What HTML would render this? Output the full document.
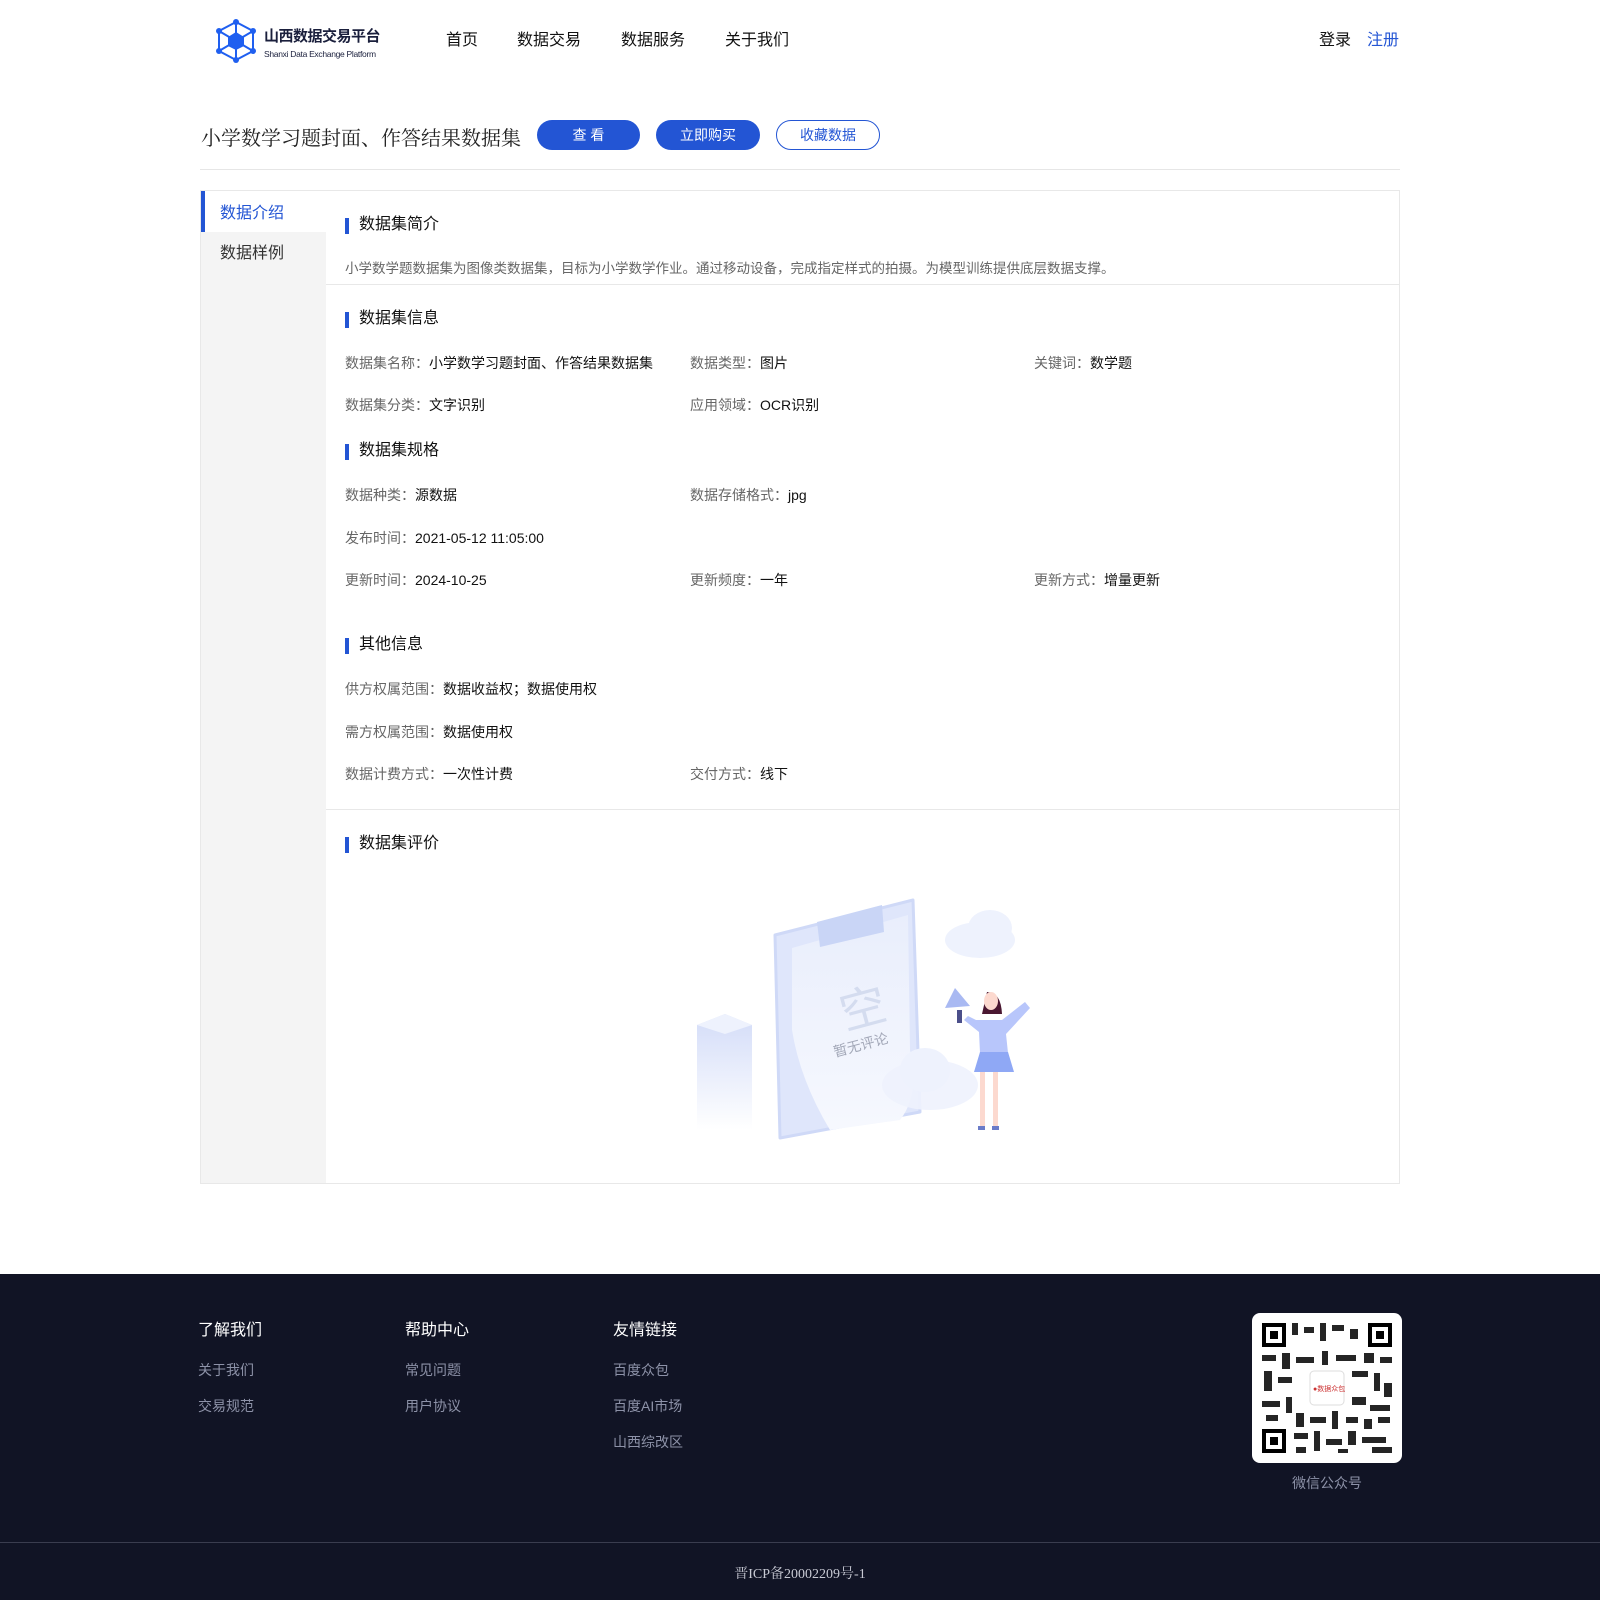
<!DOCTYPE html>
<html><head><meta charset="utf-8"><style>
*{margin:0;padding:0;box-sizing:border-box}
body{width:1600px;height:1600px;background:#fff;font-family:"Liberation Sans","Noto Sans CJK SC",sans-serif;position:relative;color:#111;overflow:hidden}
.a{position:absolute;white-space:nowrap}
.nav{font-size:16px;color:#111;top:26px}
.btn{position:absolute;top:120px;height:30px;border-radius:15px;font-size:14px;text-align:center;line-height:30px}
.sec{position:absolute;left:345px;font-size:16px;color:#111;padding-left:14px;line-height:20px}
.sec:before{content:"";position:absolute;left:0;top:3px;width:4px;height:16px;background:#2355d4}
.f{position:absolute;font-size:14px;color:#666;line-height:18px}
.f b{font-weight:normal;color:#111}
.fh{position:absolute;font-size:16px;color:#fff}
.fl{position:absolute;font-size:14px;color:#8d92a8}
</style></head><body>
<svg class="a" style="left:216px;top:19px" width="40" height="44" viewBox="0 0 40 44">
<g stroke="#1f5ff0" stroke-width="2" fill="none"><polygon points="20,3 37,12 37,32 20,41 3,32 3,12"/><line x1="20" y1="3" x2="20" y2="41"/><line x1="3" y1="12" x2="37" y2="32"/><line x1="37" y1="12" x2="3" y2="32"/></g>
<polygon points="20,13 28,18 28,27 20,31 12,27 12,18" fill="#1f5ff0"/>
<g fill="#1f5ff0"><circle cx="20" cy="3" r="3"/><circle cx="37" cy="12" r="3"/><circle cx="37" cy="32" r="3"/><circle cx="20" cy="41" r="3"/><circle cx="3" cy="32" r="3"/><circle cx="3" cy="12" r="3"/></g></svg>
<div class="a" style="left:264px;top:25px;font-size:15px;font-weight:bold;color:#1a1f3c;letter-spacing:-.5px">山西数据交易平台</div>
<div class="a" style="left:264px;top:49px;font-size:8.5px;color:#1a1f3c;letter-spacing:-.3px">Shanxi Data Exchange Platform</div>
<div class="a nav" style="left:446px">首页</div>
<div class="a nav" style="left:517px">数据交易</div>
<div class="a nav" style="left:621px">数据服务</div>
<div class="a nav" style="left:725px">关于我们</div>
<div class="a nav" style="left:1319px">登录</div>
<div class="a nav" style="left:1367px;color:#2355d4">注册</div>

<div class="a" style="left:201px;top:122px;font-size:20px;color:#222;font-family:'Liberation Serif','Noto Serif CJK SC',serif">小学数学习题封面、作答结果数据集</div>
<div class="btn" style="left:537px;width:103px;background:#2355d4;color:#fff">查 看</div>
<div class="btn" style="left:656px;width:104px;background:#2355d4;color:#fff">立即购买</div>
<div class="btn" style="left:776px;width:104px;border:1px solid #2355d4;color:#2355d4;line-height:28px">收藏数据</div>
<div class="a" style="left:200px;top:169px;width:1200px;height:1px;background:#e6e6e6"></div>

<div class="a" style="left:200px;top:190px;width:1200px;height:994px;border:1px solid #e8e8e8"></div>
<div class="a" style="left:201px;top:191px;width:125px;height:992px;background:#f4f4f4"></div>
<div class="a" style="left:201px;top:191px;width:125px;height:41px;background:#fff;border-left:4px solid #2355d4"></div>
<div class="a" style="left:220px;top:199px;font-size:16px;color:#2355d4">数据介绍</div>
<div class="a" style="left:220px;top:239px;font-size:16px;color:#333">数据样例</div>

<div class="sec" style="top:215px">数据集简介</div>
<div class="f" style="left:345px;top:260px;font-size:13.5px">小学数学题数据集为图像类数据集，目标为小学数学作业。通过移动设备，完成指定样式的拍摄。为模型训练提供底层数据支撑。</div>
<div class="a" style="left:326px;top:284px;width:1073px;height:1px;background:#e8e8e8"></div>
<div class="sec" style="top:309px">数据集信息</div>
<div class="f" style="left:345px;top:354px">数据集名称：<b>小学数学习题封面、作答结果数据集</b></div>
<div class="f" style="left:690px;top:354px">数据类型：<b>图片</b></div>
<div class="f" style="left:1034px;top:354px">关键词：<b>数学题</b></div>
<div class="f" style="left:345px;top:396px">数据集分类：<b>文字识别</b></div>
<div class="f" style="left:690px;top:396px">应用领域：<b>OCR识别</b></div>
<div class="sec" style="top:441px">数据集规格</div>
<div class="f" style="left:345px;top:486px">数据种类：<b>源数据</b></div>
<div class="f" style="left:690px;top:486px">数据存储格式：<b>jpg</b></div>
<div class="f" style="left:345px;top:529px">发布时间：<b>2021-05-12 11:05:00</b></div>
<div class="f" style="left:345px;top:571px">更新时间：<b>2024-10-25</b></div>
<div class="f" style="left:690px;top:571px">更新频度：<b>一年</b></div>
<div class="f" style="left:1034px;top:571px">更新方式：<b>增量更新</b></div>
<div class="sec" style="top:635px">其他信息</div>
<div class="f" style="left:345px;top:680px">供方权属范围：<b>数据收益权；数据使用权</b></div>
<div class="f" style="left:345px;top:723px">需方权属范围：<b>数据使用权</b></div>
<div class="f" style="left:345px;top:765px">数据计费方式：<b>一次性计费</b></div>
<div class="f" style="left:690px;top:765px">交付方式：<b>线下</b></div>
<div class="a" style="left:326px;top:809px;width:1073px;height:1px;background:#e8e8e8"></div>
<div class="sec" style="top:834px">数据集评价</div>

<svg class="a" style="left:680px;top:880px" width="380" height="270" viewBox="0 0 380 270">
<defs><linearGradient id="g1" x1="0" y1="0" x2="0" y2="1"><stop offset="0" stop-color="#d3dcf8"/><stop offset="1" stop-color="#fff"/></linearGradient>
<linearGradient id="g2" x1="0" y1="0" x2="0" y2="1"><stop offset="0" stop-color="#e9eefc"/><stop offset="1" stop-color="#f6f8fe"/></linearGradient></defs>
<polygon points="17,145 45,134 72,145 72,250 17,250" fill="url(#g1)"/>
<polygon points="17,145 45,134 72,145 45,154" fill="#eef2fd"/>
<polygon points="95,55 233,20 240,232 100,258" fill="#dfe6fb" stroke="#cfd9f7" stroke-width="3" stroke-linejoin="round"/>
<path d="M112,68 L228,35 L230,170 Q240,215 220,240 L150,250 Q120,200 112,150 Z" fill="url(#g2)"/>
<polygon points="137,42 202,25 204,52 140,67" fill="#c9d5f6"/>
<text x="165" y="150" font-size="46" fill="#d4dcef" transform="rotate(-15 165 150)" font-family="Noto Sans CJK SC,sans-serif">空</text>
<text x="155" y="177" font-size="14" fill="#a3a8b8" transform="rotate(-15 155 177)" font-family="Noto Sans CJK SC,sans-serif">暂无评论</text>
<ellipse cx="250" cy="205" rx="48" ry="25" fill="#eef2fd" opacity=".9"/>
<ellipse cx="245" cy="190" rx="25" ry="22" fill="#eef2fd"/>
<ellipse cx="300" cy="60" rx="35" ry="18" fill="#eef2fd"/>
<ellipse cx="310" cy="48" rx="22" ry="18" fill="#eef2fd"/>
<polygon points="265,128 275,108 290,126" fill="#a9b9f2"/>
<rect x="277" y="130" width="5" height="13" fill="#4b4f8a"/>
<path d="M307,112 q14,0 15,22 l-20,0 z" fill="#4a1731"/>
<ellipse cx="311" cy="121" rx="7" ry="9" fill="#fcd9cf"/>
<path d="M296,140 L322,140 L345,122 L350,128 L326,154 L328,173 L300,173 L299,152 L284,140 L288,136 Z" fill="#b8c6fb"/>
<polygon points="300,172 328,172 334,192 294,192" fill="#8fa8f5"/>
<rect x="300" y="192" width="5" height="55" fill="#fcd9cf"/><rect x="313" y="192" width="5" height="55" fill="#fcd9cf"/>
<rect x="298" y="246" width="7" height="4" fill="#6a7bc8"/><rect x="312" y="246" width="7" height="4" fill="#6a7bc8"/>
</svg>

<div class="a" style="left:0;top:1274px;width:1600px;height:326px;background:#111425"></div>
<div class="fh" style="left:198px;top:1316px">了解我们</div>
<div class="fh" style="left:405px;top:1316px">帮助中心</div>
<div class="fh" style="left:613px;top:1316px">友情链接</div>
<div class="fl" style="left:198px;top:1360px">关于我们</div>
<div class="fl" style="left:198px;top:1396px">交易规范</div>
<div class="fl" style="left:405px;top:1360px">常见问题</div>
<div class="fl" style="left:405px;top:1396px">用户协议</div>
<div class="fl" style="left:613px;top:1360px">百度众包</div>
<div class="fl" style="left:613px;top:1396px">百度AI市场</div>
<div class="fl" style="left:613px;top:1432px">山西综改区</div>
<svg class="a" style="left:1252px;top:1313px" width="150" height="150" viewBox="0 0 150 150">
<rect width="150" height="150" rx="8" fill="#fff"/>
<g fill="#000">
<rect x="10" y="10" width="24" height="24"/><rect x="116" y="10" width="24" height="24"/><rect x="10" y="116" width="24" height="24"/>
</g>
<g fill="#fff"><rect x="14" y="14" width="16" height="16"/><rect x="120" y="14" width="16" height="16"/><rect x="14" y="120" width="16" height="16"/></g>
<g fill="#000"><rect x="18" y="18" width="8" height="8"/><rect x="124" y="18" width="8" height="8"/><rect x="18" y="124" width="8" height="8"/></g>
<g fill="#000" opacity=".85">
<rect x="40" y="10" width="6" height="12"/><rect x="52" y="14" width="10" height="6"/><rect x="68" y="10" width="6" height="18"/><rect x="80" y="12" width="12" height="6"/><rect x="98" y="16" width="8" height="10"/>
<rect x="10" y="42" width="14" height="6"/><rect x="30" y="40" width="8" height="16"/><rect x="44" y="44" width="18" height="6"/><rect x="70" y="38" width="6" height="14"/><rect x="84" y="42" width="20" height="6"/><rect x="112" y="40" width="10" height="10"/><rect x="128" y="44" width="12" height="6"/>
<rect x="12" y="58" width="8" height="20"/><rect x="26" y="64" width="14" height="6"/><rect x="100" y="58" width="16" height="6"/><rect x="122" y="60" width="6" height="18"/><rect x="132" y="70" width="8" height="14"/>
<rect x="10" y="88" width="18" height="6"/><rect x="34" y="84" width="6" height="16"/><rect x="100" y="84" width="14" height="8"/><rect x="118" y="92" width="20" height="6"/>
<rect x="14" y="102" width="12" height="6"/><rect x="44" y="100" width="8" height="14"/><rect x="58" y="104" width="16" height="6"/><rect x="80" y="98" width="6" height="18"/><rect x="94" y="104" width="12" height="6"/><rect x="112" y="106" width="8" height="10"/><rect x="126" y="104" width="12" height="6"/>
<rect x="42" y="120" width="14" height="6"/><rect x="62" y="118" width="6" height="20"/><rect x="74" y="126" width="16" height="6"/><rect x="96" y="118" width="8" height="14"/><rect x="110" y="124" width="24" height="6"/><rect x="44" y="134" width="10" height="6"/><rect x="86" y="136" width="10" height="4"/><rect x="120" y="134" width="20" height="6"/>
</g>
<rect x="58" y="58" width="34" height="34" rx="4" fill="#fff" stroke="#ddd"/>
<text x="61" y="78" font-size="7" fill="#c33">●数据众包</text>
</svg>
<div class="a" style="left:1292px;top:1473px;font-size:14px;color:#8d92a8">微信公众号</div>
<div class="a" style="left:0;top:1542px;width:1600px;height:1px;background:#3a3d4f"></div>
<div class="a" style="left:0;top:1563px;width:1600px;text-align:center;font-size:14px;color:#c8cad4;font-family:'Liberation Serif','Noto Serif CJK SC',serif">晋ICP备20002209号-1</div>
</body></html>
